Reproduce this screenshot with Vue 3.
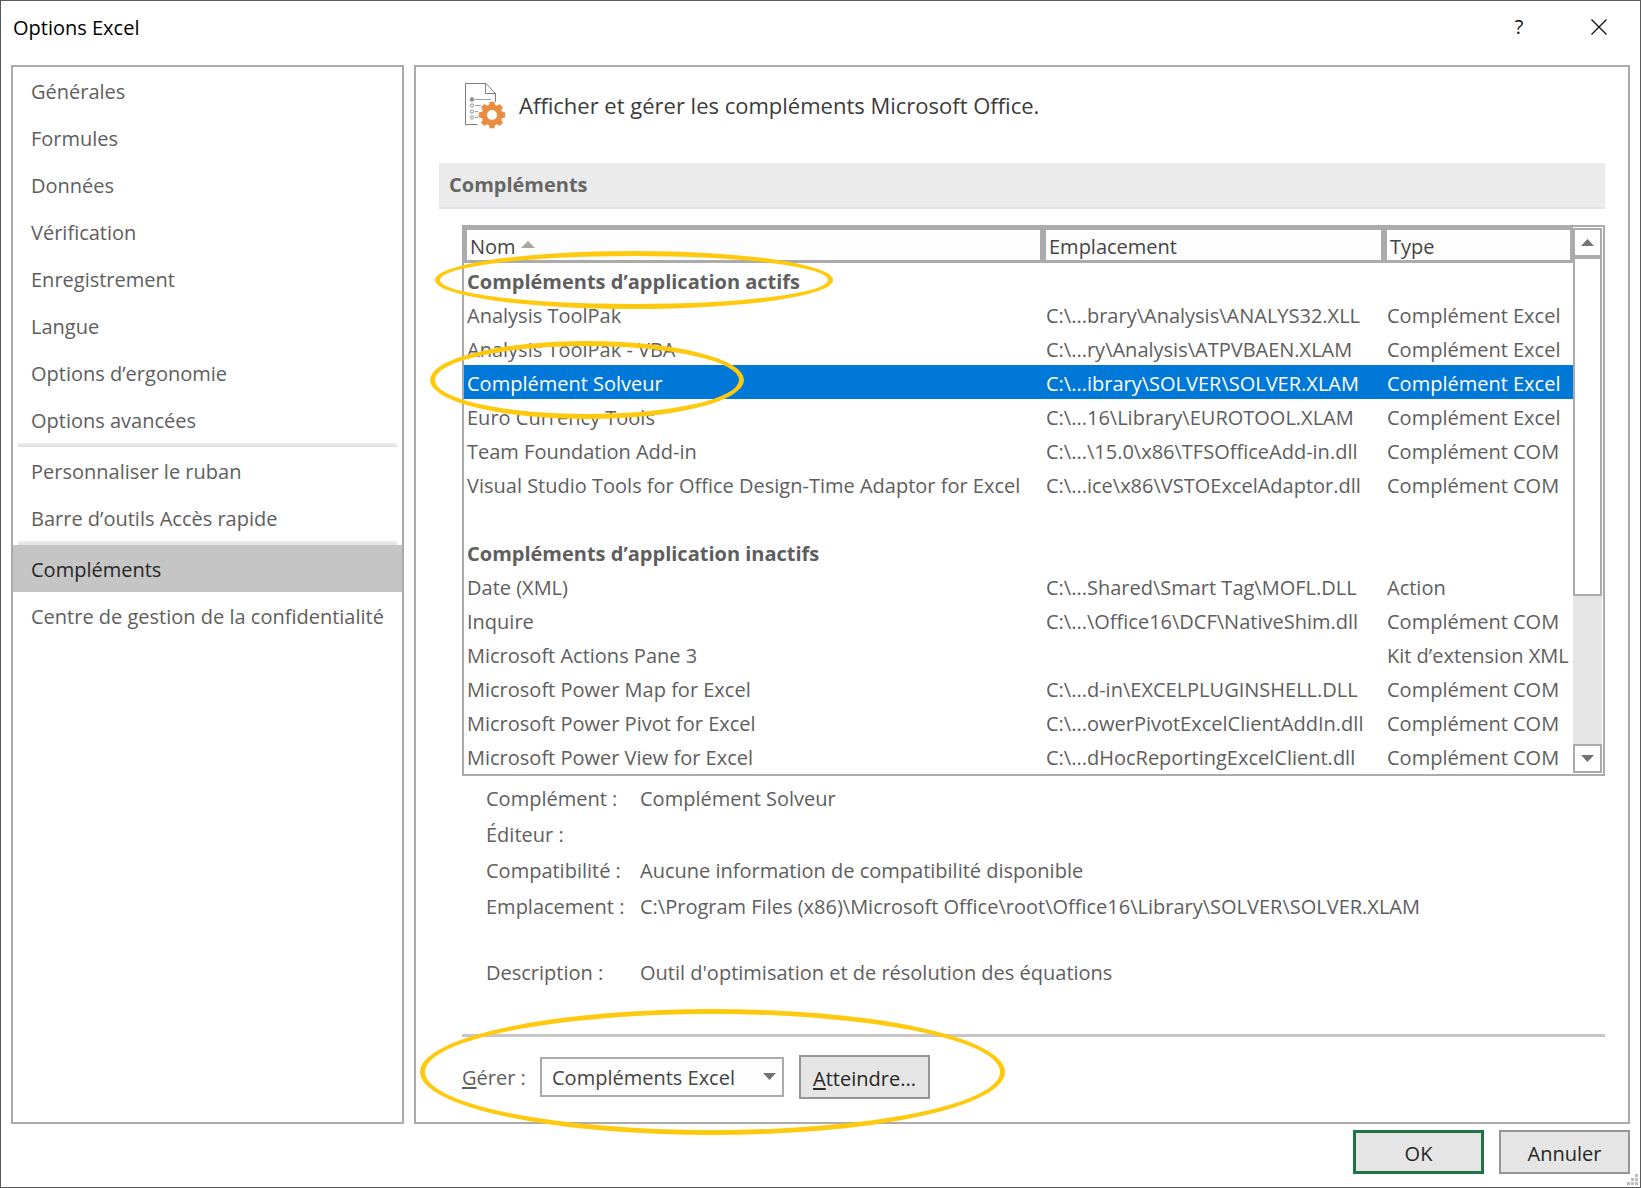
<script setup>
import { ref } from 'vue'

const navGroups = [
  [
    'Générales',
    'Formules',
    'Données',
    'Vérification',
    'Enregistrement',
    'Langue',
    'Options d’ergonomie',
    'Options avancées',
  ],
  ['Personnaliser le ruban', 'Barre d’outils Accès rapide'],
  ['Compléments', 'Centre de gestion de la confidentialité'],
]
const currentPage = ref('Compléments')

const addInGroups = [
  {
    title: 'Compléments d’application actifs',
    items: [
      ['Analysis ToolPak', 'C:\\...brary\\Analysis\\ANALYS32.XLL', 'Complément Excel'],
      ['Analysis ToolPak - VBA', 'C:\\...ry\\Analysis\\ATPVBAEN.XLAM', 'Complément Excel'],
      ['Complément Solveur', 'C:\\...ibrary\\SOLVER\\SOLVER.XLAM', 'Complément Excel'],
      ['Euro Currency Tools', 'C:\\...16\\Library\\EUROTOOL.XLAM', 'Complément Excel'],
      ['Team Foundation Add-in', 'C:\\...\\15.0\\x86\\TFSOfficeAdd-in.dll', 'Complément COM'],
      ['Visual Studio Tools for Office Design-Time Adaptor for Excel', 'C:\\...ice\\x86\\VSTOExcelAdaptor.dll', 'Complément COM'],
    ],
  },
  {
    title: 'Compléments d’application inactifs',
    items: [
      ['Date (XML)', 'C:\\...Shared\\Smart Tag\\MOFL.DLL', 'Action'],
      ['Inquire', 'C:\\...\\Office16\\DCF\\NativeShim.dll', 'Complément COM'],
      ['Microsoft Actions Pane 3', '', 'Kit d’extension XML'],
      ['Microsoft Power Map for Excel', 'C:\\...d-in\\EXCELPLUGINSHELL.DLL', 'Complément COM'],
      ['Microsoft Power Pivot for Excel', 'C:\\...owerPivotExcelClientAddIn.dll', 'Complément COM'],
      ['Microsoft Power View for Excel', 'C:\\...dHocReportingExcelClient.dll', 'Complément COM'],
    ],
  },
]
const selected = ref('Complément Solveur')

const details = [
  ['Complément :', 'Complément Solveur'],
  ['Éditeur :', ''],
  ['Compatibilité :', 'Aucune information de compatibilité disponible'],
  ['Emplacement :', 'C:\\Program Files (x86)\\Microsoft Office\\root\\Office16\\Library\\SOLVER\\SOLVER.XLAM'],
  ['Description :', "Outil d'optimisation et de résolution des équations"],
]
const managed = ref('Compléments Excel')
</script>

<template>
  <div class="window">
    <header class="titlebar">
      <h1>Options Excel</h1>
      <button class="help" type="button">?</button>
      <button class="close" type="button" aria-label="Fermer">
        <svg width="16" height="16" viewBox="0 0 16 16"><path d="M.5 .5l15 15M15.500 .5l-15 15" stroke="#111" stroke-width="1.300" fill="none" /></svg>
      </button>
    </header>

    <div class="body">
      <nav class="panel nav">
        <ul v-for="(group, g) in navGroups" :key="g">
          <li v-for="page in group" :key="page">
            <a href="#" :class="{ current: page === currentPage }" @click.prevent="currentPage = page">{{ page }}</a>
          </li>
        </ul>
      </nav>

      <main class="panel content">
        <div class="intro">
          <svg width="42" height="48" viewBox="0 0 42 48">
            <path d="M13.500 42.500H1.500V1.500H22l9.500 10V20M21.500 1.500v10h10" fill="none" stroke="#7d7d7d" />
            <circle cx="8" cy="17.500" r="2.200" fill="#909090" />
            <path d="M11 17.500h16M11 23.500h6M11 29.500h3M11 35.500h3" stroke="#a0a0a0" />
            <g fill="#fff" stroke="#8c8c8c"><circle cx="8" cy="23.500" r="1.600" /><circle cx="8" cy="29.500" r="1.600" /><circle cx="8" cy="35.500" r="1.600" /></g>
            <g transform="translate(28 33)">
              <g fill="#e88d42">
                <circle r="10.500" />
                <path v-for="n in 8" :key="n" d="M-3.200 -9.500L-2.400 -13.200H2.400L3.200 -9.500z" :transform="`rotate(${n * 45})`" />
              </g>
              <circle r="5" fill="#fff" />
            </g>
          </svg>
          <p>Afficher et gérer les compléments Microsoft Office.</p>
        </div>

        <h2>Compléments</h2>

        <div class="section">
          <div class="list">
            <table>
              <colgroup><col class="c-name" /><col class="c-path" /><col /></colgroup>
              <thead>
                <tr>
                  <th scope="col">Nom <svg width="14" height="7" viewBox="0 0 14 7"><path d="M0 7L7 0l7 7z" fill="#aca899" /></svg></th>
                  <th scope="col">Emplacement</th>
                  <th scope="col">Type</th>
                </tr>
              </thead>
              <tbody v-for="(group, g) in addInGroups" :key="g">
                <tr v-if="g > 0"><td colspan="3"></td></tr>
                <tr><th colspan="3" scope="rowgroup">{{ group.title }}</th></tr>
                <tr v-for="item in group.items" :key="item[0]" :class="{ selected: item[0] === selected }" @click="selected = item[0]">
                  <td v-for="(cell, c) in item" :key="c">{{ cell }}</td>
                </tr>
              </tbody>
            </table>
            <div class="scrollbar">
              <button type="button" aria-label="Défiler vers le haut"><svg width="13" height="7" viewBox="0 0 13 7"><path d="M0 7L6.500 0 13 7z" fill="#737373" /></svg></button>
              <div class="thumb"></div>
              <button class="down" type="button" aria-label="Défiler vers le bas"><svg width="13" height="7" viewBox="0 0 13 7"><path d="M0 0l6.500 7L13 0z" fill="#737373" /></svg></button>
            </div>
          </div>

          <dl class="details">
            <template v-for="[label, value] in details" :key="label">
              <dt>{{ label }}</dt>
              <dd>{{ value }}</dd>
            </template>
          </dl>

          <div class="manage">
            <label for="manage"><u>G</u>érer :</label>
            <span class="select">
              <select id="manage" v-model="managed">
                <option>Compléments Excel</option>
                <option>Compléments COM</option>
                <option>Actions</option>
              </select>
              <svg width="13" height="7" viewBox="0 0 13 7"><path d="M0 0l6.500 7L13 0z" fill="#737373" /></svg>
            </span>
            <button class="btn" type="button"><span><u>A</u>tteindre...</span></button>
          </div>
        </div>
      </main>
    </div>

    <footer class="footer">
      <button class="btn primary" type="button">OK</button>
      <button class="btn" type="button">Annuler</button>
    </footer>

    <svg class="grip" width="11" height="11" viewBox="0 0 11 11" fill="#bdbdbd">
      <path d="M8 0h3v3H8zM4 4h3v3H4zM8 4h3v3H8zM0 8h3v3H0zM4 8h3v3H4zM8 8h3v3H8z" />
    </svg>
    <div class="mark mark-active"></div>
    <div class="mark mark-solver"></div>
    <div class="mark mark-manage"></div>
  </div>
</template>

<style>
body {
  margin: 0;
}
</style>

<style scoped>
* {
  box-sizing: border-box;
}
.window {
  position: relative;
  display: flex;
  flex-direction: column;
  min-height: 100vh;
  padding: 0 10px 13px;
  border: 1px solid #5a5a5a;
  background: #fff;
  color: #5e5e5e;
  font: 20px/34px "Open Sans", "Noto Sans", sans-serif;
  white-space: nowrap;
}
button,
select {
  font: inherit;
  color: #262626;
  padding: 0;
}
h1,
h2,
p,
ul,
dl,
dd {
  margin: 0;
  padding: 0;
}
.titlebar {
  display: flex;
  align-items: center;
  height: 64px;
  padding: 0 23px 12px 2px;
}
.titlebar h1 {
  flex: 1;
  padding-top: 2px;
  font-size: 20px;
  font-weight: 400;
  color: #000;
}
.titlebar button {
  display: grid;
  place-items: center;
  border: 0;
  background: none;
  color: #111;
}
.help {
  width: 16px;
  margin-right: 64px;
}
.body {
  display: flex;
  flex: 1;
  gap: 10px;
}
.panel {
  border: 2px solid #ababab;
}
.nav {
  flex: 0 0 393px;
}
.nav ul {
  list-style: none;
}
.nav ul + ul::before {
  content: "";
  display: block;
  margin: 0 5px;
  border-top: 2px solid #ebebeb;
  border-bottom: 2px solid #e2e3e6;
}
.nav a {
  display: block;
  height: 47px;
  padding: 2px 0 0 18px;
  line-height: 45px;
  color: inherit;
  text-decoration: none;
}
.nav a.current {
  background: #c5c5c5;
  color: #262626;
}
.content {
  flex: 1;
  min-width: 0;
  padding: 14px 23px 23px;
}
.intro {
  display: flex;
  align-items: center;
  gap: 13px;
  height: 82px;
  padding: 0 0 32px 25px;
  color: #3b3b3b;
}
.intro p {
  padding-bottom: 2px;
  font-size: 22px;
}
h2 {
  height: 46px;
  padding-left: 10px;
  border-bottom: 2px solid #e2e3e9;
  background: #ebebeb;
  font-size: 20px;
  font-weight: 700;
  line-height: 44px;
  color: #666;
}
.section {
  padding: 16px 0 0 23px;
}
.list {
  display: flex;
  padding-bottom: 1px;
  border: 2px solid #ababab;
}
table {
  flex: 1;
  table-layout: fixed;
  border-collapse: separate;
  border-spacing: 0;
}
.c-name {
  width: 579px;
}
.c-path {
  width: 341px;
}
th,
td {
  height: 34px;
  padding: 4px 0 0 3px;
  font-weight: 400;
  line-height: 30px;
  text-align: left;
}
tbody th {
  font-weight: 700;
}
thead th {
  height: 36px;
  border: 3px solid #ababab;
  background: #fdfdfd;
  line-height: 26px;
  color: #444;
}
thead svg {
  vertical-align: 6px;
}
.selected td {
  background: #0078d7;
  color: #fff;
}
.scrollbar {
  display: flex;
  flex-direction: column;
  width: 29px;
  margin: 1px 1px 0 0;
  background: #e5e5e5;
}
.scrollbar button {
  display: grid;
  place-items: center;
  height: 29px;
  border: 2px solid #ababab;
  background: #fff;
}
.scrollbar .down {
  margin-top: auto;
}
.thumb {
  height: 339px;
  border: 2px solid #ababab;
  background: #fff;
}
.details {
  display: grid;
  grid-template-columns: 154px 1fr;
  grid-template-rows: repeat(4, 36px) 66px;
  padding: 5px 0 43px 24px;
  line-height: 36px;
}
.details > :nth-last-child(-n + 2) {
  padding-top: 30px;
}
.manage {
  display: flex;
  align-items: center;
  border-top: 3px solid #c6c6c6;
  padding-top: 18px;
}
.manage label {
  width: 78px;
  padding-top: 2px;
}
u {
  text-underline-offset: 2px;
}
.select {
  position: relative;
  width: 244px;
  margin-right: 15px;
}
.select select {
  display: block;
  width: 100%;
  height: 40px;
  padding: 2px 0 0 10px;
  appearance: none;
  border: 2px solid #ababab;
  border-radius: 0;
  background: #fdfdfd;
  color: #444;
}
.select svg {
  position: absolute;
  right: 8px;
  top: 16px;
  pointer-events: none;
}
.btn {
  width: 131px;
  height: 44px;
  padding-top: 3px;
  border: 2px solid #969696;
  background: #e5e5e5;
}
.btn.primary {
  border: 3px solid #217346;
}
.footer {
  display: flex;
  justify-content: flex-end;
  gap: 15px;
  padding-top: 6px;
}
.grip {
  position: absolute;
  right: 2px;
  bottom: 2px;
}
.mark {
  position: absolute;
  border: 5px solid #ffc90e;
  border-radius: 50%;
  pointer-events: none;
}
.mark-active {
  left: 434px;
  top: 250px;
  width: 398px;
  height: 58px;
}
.mark-solver {
  left: 429px;
  top: 340px;
  width: 314px;
  height: 78px;
}
.mark-manage {
  left: 419px;
  top: 1008px;
  width: 585px;
  height: 126px;
}
</style>
